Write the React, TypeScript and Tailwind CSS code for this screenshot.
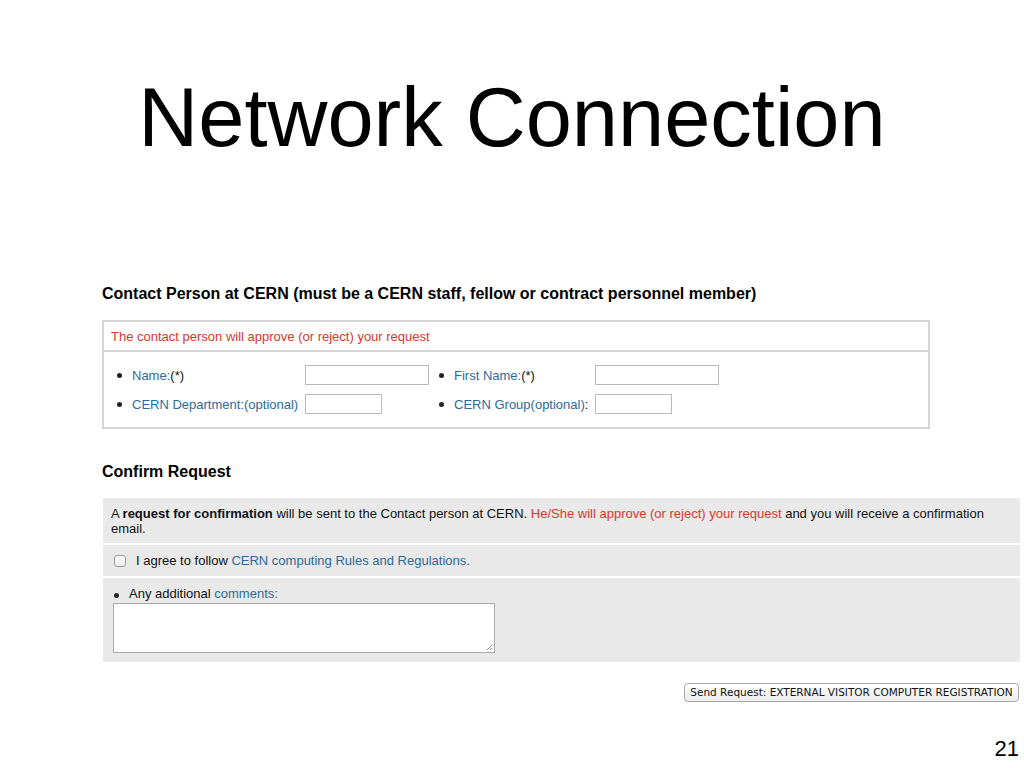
import React from "react"

const blue = "text-[#2b6b9b]"
const red = "text-[#d9382a]"

function Dot() {
  return <span className="mt-[1px] inline-block h-[5px] w-[5px] shrink-0 rounded-full bg-[#222]" />
}

function Field({
  label,
  labelWidth,
  inputWidth,
}: {
  label: React.ReactNode
  labelWidth: string
  inputWidth: string
}) {
  return (
    <div className="flex h-[20px] items-center">
      <div className="flex w-[15px] items-center">
        <Dot />
      </div>
      <span className={`${labelWidth} ${blue}`}>{label}</span>
      <span className={`${inputWidth} h-[20px] border border-[#b9b9b9] bg-white`} />
    </div>
  )
}

export default function App() {
  return (
    <div className="relative h-[768px] w-[1024px] overflow-hidden bg-white font-['Liberation_Sans',Arial,sans-serif] text-[#111]">
      <h1 className="pt-[76px] text-center text-[83px] leading-[84px] font-normal text-black">
        Network Connection
      </h1>

      <div className="ml-[102px] mt-[125px] text-[13px] leading-[15px]">
        <h2 className="h-[18px] text-[16px] leading-[18px] font-bold text-black">
          Contact Person at CERN (must be a CERN staff, fellow or contract personnel member)
        </h2>

        <div className="mt-[17px] w-[828px] border-2 border-[#d6d6d6]">
          <div className={`flex h-[30px] items-center border-b-2 border-[#d6d6d6] pl-[7px] ${red}`}>
            The contact person will approve (or reject) your request
          </div>
          <div className="flex flex-col gap-[9px] pt-[13px] pb-[13px] pl-[13px]">
            <div className="flex">
              <div className="w-[322px]">
                <Field
                  label={
                    <>
                      Name:<span className="text-[#111]">(*)</span>
                    </>
                  }
                  labelWidth="w-[173px]"
                  inputWidth="w-[124px]"
                />
              </div>
              <Field
                label={
                  <>
                    First Name:<span className="text-[#111]">(*)</span>
                  </>
                }
                labelWidth="w-[141px]"
                inputWidth="w-[124px]"
              />
            </div>
            <div className="flex">
              <div className="w-[322px]">
                <Field label="CERN Department:(optional)" labelWidth="w-[173px]" inputWidth="w-[77px]" />
              </div>
              <Field
                label={
                  <>
                    CERN Group(optional)<span className="text-[#111]">:</span>
                  </>
                }
                labelWidth="w-[141px]"
                inputWidth="w-[77px]"
              />
            </div>
          </div>
        </div>

        <h2 className="mt-[34px] h-[18px] text-[16px] leading-[18px] font-bold text-black">
          Confirm Request
        </h2>

        <div className="mt-[17px] ml-[1px] flex w-[917px] flex-col gap-[2px]">
          <div className="h-[45px] bg-[#e9e9e9] pt-[8px] pr-[20px] pl-[8px]">
            A <b>request for confirmation</b> will be sent to the Contact person at CERN.{" "}
            <span className={red}>He/She will approve (or reject) your request</span> and you will receive a
            confirmation email.
          </div>
          <div className="flex h-[31px] items-center bg-[#e9e9e9] pl-[11px]">
            <span className="h-[12px] w-[12px] rounded-[3px] border border-[#9a9a9a] bg-gradient-to-b from-white to-[#ececec]" />
            <span className="ml-[10px]">
              I agree to follow <span className={blue}>CERN computing Rules and Regulations.</span>
            </span>
          </div>
          <div className="h-[84px] bg-[#e9e9e9] pt-[8px] pl-[10px]">
            <div className="flex items-center">
              <span className="ml-[1px] w-[15px]">
                <Dot />
              </span>
              <span>
                Any additional <span className={blue}>comments:</span>
              </span>
            </div>
            <div className="relative mt-[2px] h-[50px] w-[382px] border border-[#a9a9a9] bg-white">
              <svg className="absolute right-[1px] bottom-[1px]" width="8" height="8" viewBox="0 0 8 8">
                <path d="M7 2L2 7M7 5L5 7" stroke="#8a8a8a" strokeWidth="1" />
              </svg>
            </div>
          </div>
        </div>
      </div>

      <div className="absolute top-[683px] left-[684px] flex h-[19px] w-[335px] items-center justify-center rounded-[4px] border border-[#a8a8a8] bg-gradient-to-b from-white to-[#ededed] font-['DejaVu_Sans',sans-serif] text-[10.5px] text-[#111]">
        Send Request: EXTERNAL VISITOR COMPUTER REGISTRATION
      </div>

      <div className="absolute top-[737px] right-[5px] text-[22px] leading-[24px] text-black">21</div>
    </div>
  )
}
